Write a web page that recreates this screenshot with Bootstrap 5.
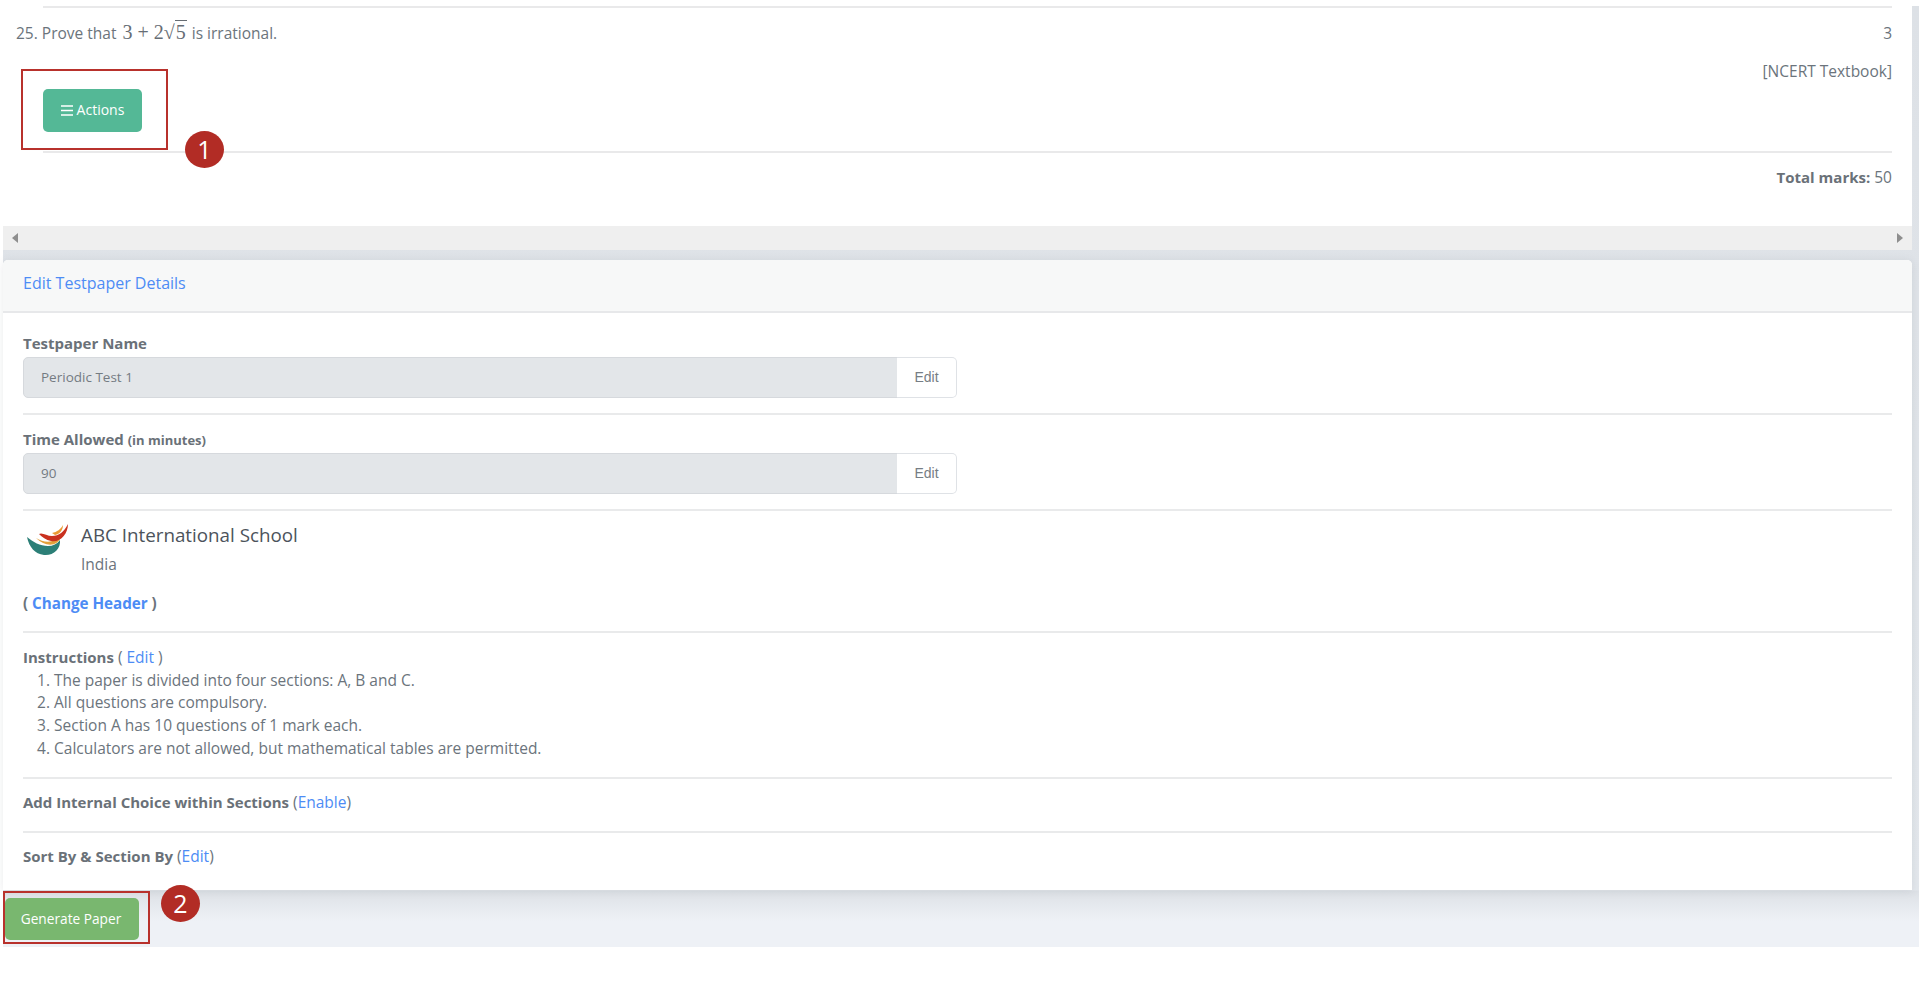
<!DOCTYPE html>
<html lang="en">
<head>
<meta charset="utf-8">
<title>Testpaper</title>
<link href="https://cdn.jsdelivr.net/npm/bootstrap@5.3.0/dist/css/bootstrap.min.css" rel="stylesheet">
<style>
html,body{height:100%;background:#fff;overflow:hidden}
body{font-family:"Open Sans",Lato,"Liberation Sans",sans-serif;font-size:15.5px;color:#6b747c;line-height:1.45}
.stage{position:relative;margin:6px 0 0 3px;width:1916px;height:941px;background:linear-gradient(#dde1e6 0,#e3e7ec 884px,#dde1e6 885px,#eef1f6 915px);padding-right:7px}
.paper{background:#fff;height:220px;padding:0 20px 0 40px}
.rule-line{height:2px;background:#e9e9ea}
.qrow{height:68px;padding-top:14px}
.qrow2{height:91px}
.marks-tag{margin-top:-16px}
.qnum{margin-left:-27px}
.mathy{font-family:"Liberation Serif",serif;font-size:20px;color:#666d74;line-height:1;margin:0 1px 0 2px}
.radicand{border-top:1px solid #666d74;padding:0 1px;line-height:1}
.total{padding-top:13px;text-align:right}
.total b,.strong-lbl{font-weight:700;font-size:15px;color:#6a7178}
.scroller{height:24px;background:#efefef;padding:0 9px}
.tri-left{width:0;height:0;border:5px solid transparent;border-left-width:0;border-right:6px solid #8e8e8e}
.tri-right{width:0;height:0;border:5px solid transparent;border-right-width:0;border-left:6px solid #8e8e8e}
.gap-band{height:10px}
.detail-card{height:630px;background:#fff;border-radius:5px 5px 0 0;box-shadow:0 1px 8px rgba(80,90,100,.12)}
.detail-head{height:53px;background:#f7f8f8;border-bottom:2px solid #e7e8ea;padding:12px 20px 0;border-radius:5px 5px 0 0}
.detail-head .blue{font-size:16px;font-weight:500}
.blue{color:#4d8cf5;text-decoration:none}
.detail-body{padding:21px 20px 0}
.field-lbl{display:block;height:23px;line-height:18px;font-weight:700;font-size:15px;color:#6a7178;margin:0}
.field-lbl small{font-size:13px}
.field-group{width:934px;height:41px}
.field-group .form-control{background:#e3e6e9;border:1px solid #d6d9dd;font-size:13.5px;color:#747b82;padding:0 0 2px 17px;height:41px;border-radius:5px 0 0 5px}
.field-group .btn{width:60px;height:41px;background:#fff;border:1px solid #dfe2e6;border-left:0;border-radius:0 5px 5px 0;font-family:"Liberation Sans",sans-serif;font-size:14px;color:#767d84;padding:0}
.sep{height:2px;background:#e9eaeb;margin:15px 0 15px}
.sep-c{margin:17px 0 0}
.sep-d{margin:15px 0 12px}
.sep-e{margin:0}
.school-logo{width:44px;height:34px;margin:0 11px 0 3px;flex:none}
.school-name{font-size:18.8px;color:#4c535b;line-height:24px;font-weight:500}
.school-place{margin-top:6px;line-height:22px}
.change-hdr{margin-top:17px;line-height:22px;font-weight:700;font-size:15.2px}
.instr{padding-top:13px}
.instr ol{margin:0;padding-left:31px}
.instr li{height:22.6px;line-height:22.6px}
.sep-f{margin:18px 0 0}
.opt-row{padding-top:12px;height:52px;line-height:22px}
.opt-row2{padding-top:12px;height:40px;line-height:22px}
.go-btn{position:absolute;left:2px;top:892px;width:134px;height:42px;background:#79b76f;color:#fff;border:0;border-radius:5px;font-size:13.7px;font-weight:500;padding:0 2px 0 0}
.act-btn{position:absolute;left:40px;top:83px;width:99px;height:43px;background:#54b896;color:#fff;border:0;border-radius:5px;font-size:14px;padding:0}
.mark-box{position:absolute;border:2px solid #b8312c;pointer-events:none}
.mark-a{left:18px;top:63px;width:147px;height:81px}
.mark-b{left:0;top:885px;width:147px;height:53px}
.mark-dot{position:absolute;width:39px;height:37px;border-radius:50%;background:#b22c25;color:#fff;font-size:25px;line-height:37px;text-align:center}
.dot-a{left:182px;top:125px}
.dot-b{left:158px;top:879px}
.burger{display:inline-block;vertical-align:-1px;margin-right:4px}
</style>
</head>
<body>
<div class="stage">
  <div class="paper">
    <div class="rule-line"></div>
    <div class="qrow d-flex justify-content-between">
      <div><span class="qnum">25.</span> Prove that <span class="mathy">3 + 2√<span class="radicand">5</span></span> is irrational.</div>
      <div>3</div>
    </div>
    <div class="qrow2 text-end"><div class="marks-tag">[NCERT Textbook]</div></div>
    <div class="rule-line"></div>
    <div class="total"><b>Total marks:</b> 50</div>
  </div>
  <div class="scroller d-flex align-items-center justify-content-between">
    <span class="tri-left"></span><span class="tri-right"></span>
  </div>
  <div class="gap-band"></div>
  <div class="detail-card">
    <div class="detail-head"><a class="blue" href="#">Edit Testpaper Details</a></div>
    <div class="detail-body">
      <label class="field-lbl">Testpaper Name</label>
      <div class="input-group field-group">
        <input class="form-control" type="text" value="Periodic Test 1" disabled>
        <button class="btn" type="button">Edit</button>
      </div>
      <div class="sep"></div>
      <label class="field-lbl">Time Allowed <small>(in minutes)</small></label>
      <div class="input-group field-group">
        <input class="form-control" type="text" value="90" disabled>
        <button class="btn" type="button">Edit</button>
      </div>
      <div class="sep sep-d"></div>
      <div class="d-flex">
        <svg class="school-logo" viewBox="0 0 44 34" aria-hidden="true">
          <path d="M1 14C7 19 14 23 22 23C27 23 31 21 34 17C35 26 27 33 18 32C9 31 3 24 1 14Z" fill="#2c7f77"/>
          <path d="M10 15C18 20 27 20 35 14C32 23 20 25 10 15Z" fill="#e3a13b"/>
          <path d="M13 11C16 9 21 13 26 13C33 13 38 9 42 1C42 11 34 20 25 18C20 17 16 14 13 11Z" fill="#c9311f"/>
          <path d="M26 10C31 9 35 6 37 2C37 7 34 11 29 12Z" fill="#eb9a34"/>
        </svg>
        <div>
          <div class="school-name">ABC International School</div>
          <div class="school-place">India</div>
        </div>
      </div>
      <div class="change-hdr">( <a class="blue" href="#">Change Header</a> )</div>
      <div class="sep sep-c"></div>
      <div class="instr">
        <div><span class="strong-lbl">Instructions</span> ( <a class="blue" href="#">Edit</a> )</div>
        <ol>
          <li>The paper is divided into four sections: A, B and C.</li>
          <li>All questions are compulsory.</li>
          <li>Section A has 10 questions of 1 mark each.</li>
          <li>Calculators are not allowed, but mathematical tables are permitted.</li>
        </ol>
      </div>
      <div class="sep sep-f"></div>
      <div class="opt-row"><span class="strong-lbl">Add Internal Choice within Sections</span> (<a class="blue" href="#">Enable</a>)</div>
      <div class="sep sep-e"></div>
      <div class="opt-row2"><span class="strong-lbl">Sort By &amp; Section By</span> (<a class="blue" href="#">Edit</a>)</div>
    </div>
  </div>
  <button class="act-btn" type="button"><svg class="burger" width="12" height="11" viewBox="0 0 12 11" aria-hidden="true"><path d="M0 1h12M0 5.5h12M0 10h12" stroke="#fff" stroke-width="1.4"/></svg>Actions</button>
  <button class="go-btn" type="button">Generate Paper</button>
  <div class="mark-box mark-a"></div>
  <div class="mark-box mark-b"></div>
  <div class="mark-dot dot-a">1</div>
  <div class="mark-dot dot-b">2</div>
</div>
</body>
</html>
